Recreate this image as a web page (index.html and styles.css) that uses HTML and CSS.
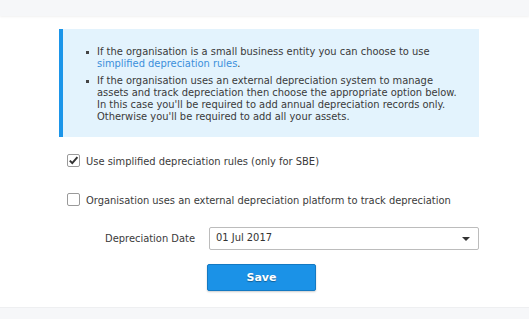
FILE: index.html
```html
<!DOCTYPE html>
<html lang="en">
<head>
<meta charset="utf-8">
<title>Depreciation settings</title>
<link rel="stylesheet" href="styles.css">
</head>
<body>
<div class="topbar"></div>
<main class="content">
  <div class="info">
    <ul class="info-list">
      <li>If the organisation is a small business entity you can choose to use <a href="#" class="link">simplified depreciation rules</a>.</li>
      <li>If the organisation uses an external depreciation system to manage assets and track depreciation then choose the appropriate option below. In this case you'll be required to add annual depreciation records only. Otherwise you'll be required to add all your assets.</li>
    </ul>
  </div>
  <form class="form">
    <label class="check-row">
      <span class="check checked"><svg width="11" height="11" viewBox="0 0 11 11"><path d="M1.8 5.6 L4.3 8.1 L9.4 2.2" fill="none" stroke="#333" stroke-width="2"/></svg></span>
      <span class="check-label">Use simplified depreciation rules (only for SBE)</span>
    </label>
    <label class="check-row row2">
      <span class="check"></span>
      <span class="check-label">Organisation uses an external depreciation platform to track depreciation</span>
    </label>
    <div class="field-row">
      <span class="field-label">Depreciation Date</span>
      <div class="select">
        <span class="select-value">01 Jul 2017</span>
        <span class="caret"></span>
      </div>
    </div>
    <div class="actions">
      <button type="button" class="btn">Save</button>
    </div>
  </form>
</main>
<div class="bottombar"></div>
</body>
</html>
```
FILE: styles.css
```css
html, body {
  margin: 0;
  padding: 0;
  background: #fff;
}
body {
  font-family: "DejaVu Sans Condensed", "DejaVu Sans", Verdana, sans-serif;
  font-stretch: condensed;
  font-size: 11px;
  color: #3a3a3a;
  width: 529px;
  height: 319px;
  overflow: hidden;
  display: flex;
  flex-direction: column;
}
.topbar {
  height: 16px;
  background: #f6f7f9;
  box-shadow: 0 1px 2px rgba(0,0,0,0.06);
  flex: none;
}
.content {
  flex: none;
  height: 291px;
  display: flex;
  flex-direction: column;
}
.info {
  margin: 13px 0 0 59px;
  width: 416px;
  background: #e3f3fd;
  border-left: 4px solid #1b95e9;
  padding: 17px 0 14px 0;
}
.info-list {
  margin: 0;
  padding: 0 16px 0 34px;
  list-style: none;
  line-height: 12px;
}
.info-list li {
  position: relative;
}
.info-list li::before {
  content: "";
  position: absolute;
  left: -11px;
  top: 5px;
  width: 3px;
  height: 3px;
  background: #444;
}
.info-list li + li {
  margin-top: 5px;
}
.link {
  color: #3b8fdb;
  text-decoration: none;
}
.form {
  margin: 17px 0 0 67px;
  display: flex;
  flex-direction: column;
}
.check-row {
  display: flex;
  align-items: center;
  height: 13px;
  gap: 6px;
}
.row2 {
  margin-top: 26px;
}
.check {
  width: 11px;
  height: 11px;
  border: 1px solid #9a9a9a;
  border-radius: 2px;
  background: #fff;
  display: flex;
  align-items: center;
  justify-content: center;
  flex: none;
}
.check svg {
  display: block;
}
.check-label {
  line-height: 13px;
  position: relative;
  top: 1px;
}
.field-row {
  margin-top: 21px;
  display: flex;
  align-items: center;
}
.field-label {
  width: 128px;
  padding-right: 14px;
  text-align: right;
}
.select {
  height: 21px;
  border: 1px solid #bcbcbc;
  border-radius: 2px;
  display: flex;
  align-items: center;
  justify-content: space-between;
  padding: 0 8px 0 6px;
  box-sizing: content-box;
  width: 254px;
}
.select-value {
  color: #333;
  position: relative;
  top: -1px;
}
.caret {
  width: 0;
  height: 0;
  border-left: 4px solid transparent;
  border-right: 4px solid transparent;
  border-top: 4px solid #333;
}
.actions {
  margin-top: 14px;
  padding-left: 140px;
  display: flex;
}
.btn {
  width: 109px;
  height: 27px;
  background: #1b92e7;
  border: 1px solid #1479c2;
  border-radius: 2px;
  color: #fff;
  font-family: "DejaVu Sans", Verdana, sans-serif;
  font-weight: bold;
  font-size: 11px;
  text-shadow: 0 1px 1px rgba(0,0,0,0.35);
  box-shadow: 0 1px 2px rgba(0,0,0,0.2);
  padding: 0;
  cursor: pointer;
}
.bottombar {
  flex: 1;
  background: #f6f7f9;
  border-top: 1px solid #eeeff1;
}
```
